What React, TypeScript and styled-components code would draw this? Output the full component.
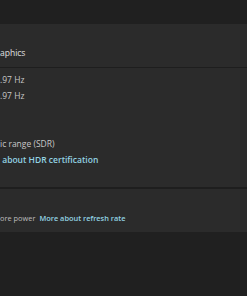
import styled, { createGlobalStyle } from "styled-components";

const GlobalStyle = createGlobalStyle`
  body {
    margin: 0;
    background: #202020;
    font-family: "Open Sans", "Noto Sans", sans-serif;
    -webkit-font-smoothing: antialiased;
  }
`;

const Page = styled.div`
  width: 247px;
  height: 296px;
  overflow: hidden;
  padding-top: 24px;
  box-sizing: border-box;
  background: #202020;
`;

const Card = styled.div`
  background: #2b2b2b;
  display: flex;
  flex-direction: column;
`;

const Header = styled.div`
  height: 43px;
  display: flex;
  align-items: center;
  padding-top: 14px;
  box-sizing: border-box;
  font-size: 8.5px;
  color: #e0e0e0;
`;

const Divider = styled.div<{ $thick?: boolean }>`
  height: ${(p) => (p.$thick ? "2px" : "1px")};
  background: #1e1e1e;
`;

const InfoList = styled.div`
  display: flex;
  flex-direction: column;
  padding: 4px 0 19px;
`;

const InfoLine = styled.div`
  height: 16px;
  line-height: 16px;
  font-size: 8.5px;
  color: #c8c8c8;
  white-space: nowrap;
`;

const Link = styled.span`
  color: #93d3e3;
  font-weight: 600;
`;

const SettingRow = styled.div`
  height: 43px;
  display: flex;
  flex-direction: column;
  justify-content: flex-end;
  padding-bottom: 6px;
  box-sizing: border-box;
`;

const Description = styled.div`
  height: 16px;
  line-height: 16px;
  font-size: 7.4px;
  color: #bdbdbd;
  white-space: nowrap;
  display: flex;
  gap: 4px;
`;

export default function App() {
  return (
    <>
      <GlobalStyle />
      <Page>
        <Card>
          <Header>aphics</Header>
          <Divider />
          <InfoList>
            <InfoLine>.97 Hz</InfoLine>
            <InfoLine>.97 Hz</InfoLine>
            <InfoLine />
            <InfoLine />
            <InfoLine>ic range (SDR)</InfoLine>
            <InfoLine>
              <Link>&nbsp;about HDR certification</Link>
            </InfoLine>
          </InfoList>
          <Divider $thick />
          <SettingRow>
            <Description>
              <span>ore power</span>
              <Link>More about refresh rate</Link>
            </Description>
          </SettingRow>
        </Card>
      </Page>
    </>
  );
}
